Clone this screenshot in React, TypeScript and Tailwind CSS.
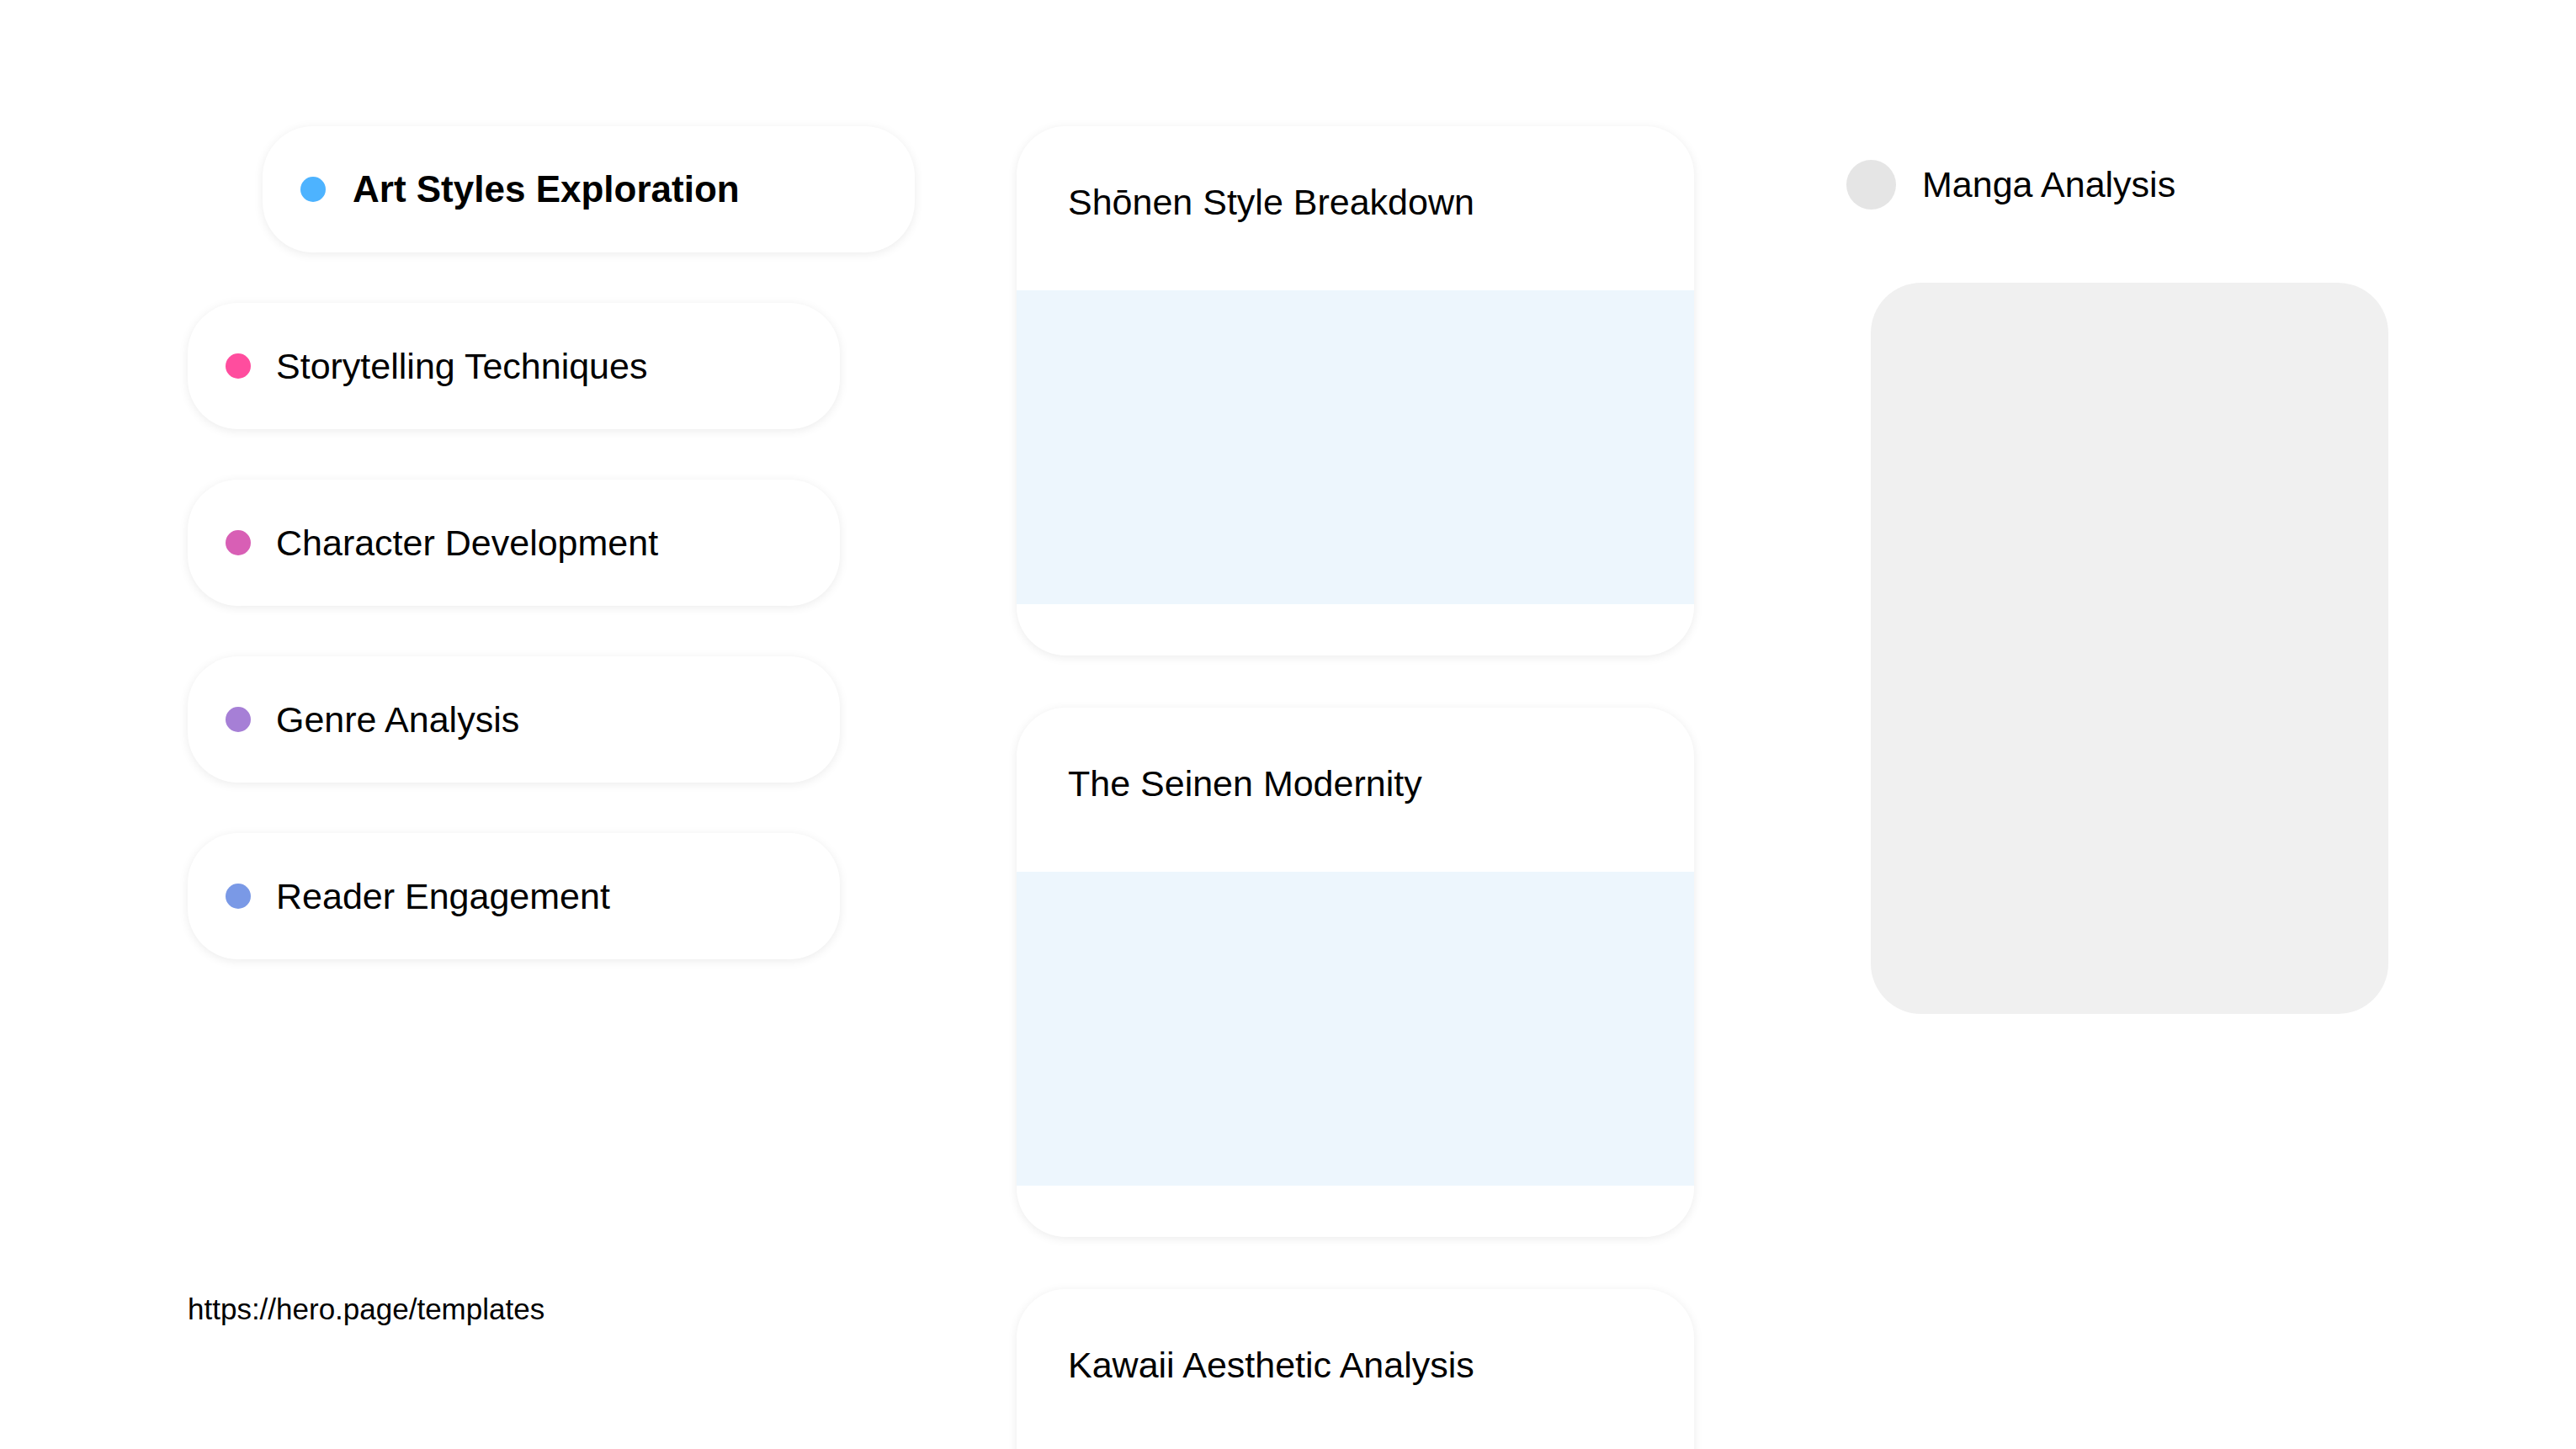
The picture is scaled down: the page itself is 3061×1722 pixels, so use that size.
export default function App() {
  const pills = [
    { t: "Storytelling Techniques", c: "bg-[#ff4d9e]" },
    { t: "Character Development", c: "bg-[#d85fb5]" },
    { t: "Genre Analysis", c: "bg-[#a67fd6]" },
    { t: "Reader Engagement", c: "bg-[#7a99e6]" },
  ];
  const cards = ["Shōnen Style Breakdown", "The Seinen Modernity", "Kawaii Aesthetic Analysis"];
  return (
    <div className="w-[3061px] h-[1722px] overflow-hidden bg-white text-black flex" style={{ fontFamily: '"Liberation Sans", Arial, sans-serif' }}>
      <div className="ml-[223px] pt-[150px] w-[775px] flex flex-col">
        <div className="ml-[89px] w-[775px] h-[150px] rounded-[60px] bg-white shadow-[0_2px_12px_rgba(0,0,0,0.08)] flex items-center pl-[45px]">
          <span className="w-[30px] h-[30px] rounded-full bg-[#4db3ff]" />
          <span className="ml-[32px] text-[44px] font-bold">Art Styles Exploration</span>
        </div>
        {pills.map((p) => (
          <div key={p.t} className="mt-[60px] w-[775px] h-[150px] rounded-[60px] bg-white shadow-[0_2px_12px_rgba(0,0,0,0.08)] flex items-center pl-[45px]">
            <span className={`w-[30px] h-[30px] rounded-full ${p.c}`} />
            <span className="ml-[30px] text-[43px]">{p.t}</span>
          </div>
        ))}
        <div className="mt-[390px] text-[35px]">https://hero.page/templates</div>
      </div>
      <div className="ml-[210px] pt-[150px] w-[805px] flex flex-col gap-[62px] shrink-0">
        {cards.map((c) => (
          <div key={c} className="w-[805px] h-[629px] shrink-0 rounded-[58px] bg-white shadow-[0_2px_12px_rgba(0,0,0,0.08)] overflow-hidden flex flex-col">
            <div className="h-[195px] flex items-center pl-[61px] pb-[15px] text-[43px]">{c}</div>
            <div className="h-[373px] bg-[#edf6fd]" />
          </div>
        ))}
      </div>
      <div className="ml-[181px] pt-[187px] flex flex-col">
        <div className="flex items-center">
          <span className="w-[59px] h-[59px] rounded-full bg-[#e5e5e5]" />
          <span className="ml-[31px] text-[43px]">Manga Analysis</span>
        </div>
        <div className="ml-[29px] mt-[84px] w-[615px] h-[869px] rounded-[60px] bg-[#f0f0f0]" />
      </div>
    </div>
  );
}
